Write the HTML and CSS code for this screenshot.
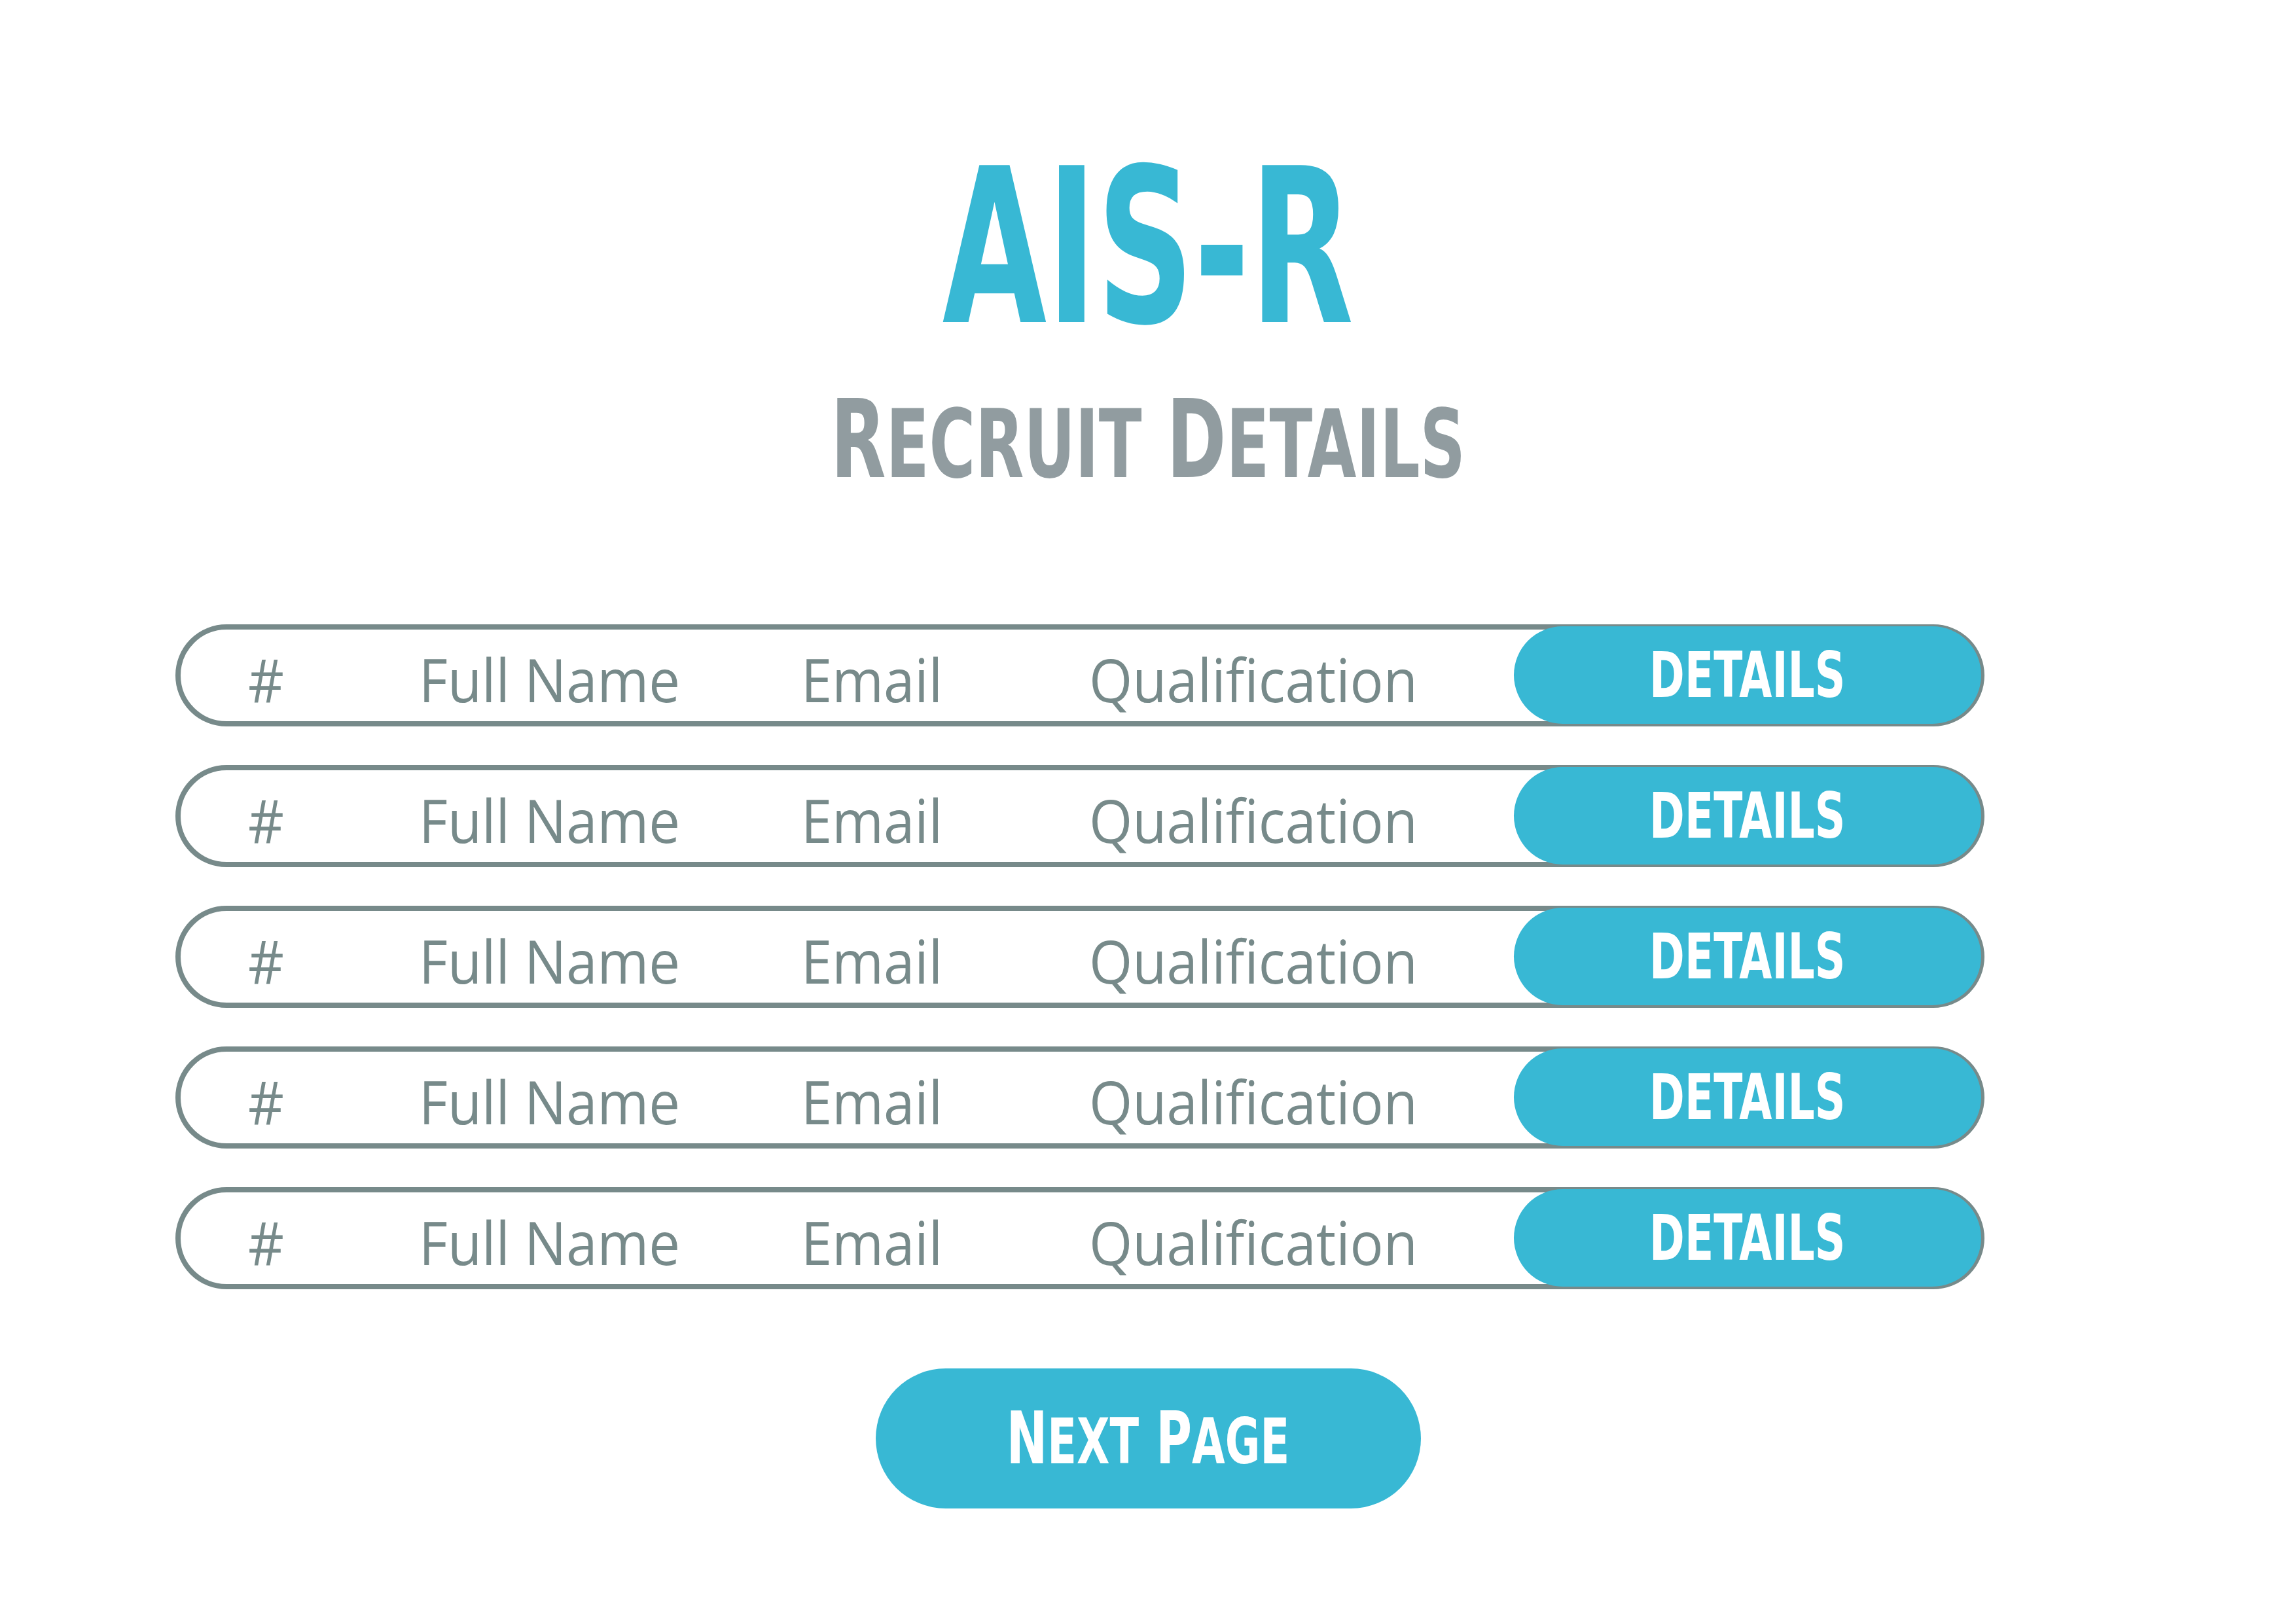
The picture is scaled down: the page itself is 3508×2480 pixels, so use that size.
FILE: index.html
```html
<!DOCTYPE html>
<html lang="en">
<head>
<meta charset="utf-8">
<title>AIS-R Recruit Details</title>
<link rel="stylesheet" href="styles.css">
</head>
<body>
<main class="page">
  <header class="masthead">
    <h1 class="brand"><span class="squeeze brand-text">AIS-R</span></h1>
    <h2 class="subtitle"><span class="squeeze sub-text"><span class="cap">R</span><span class="sc">ecruit</span> <span class="cap">D</span><span class="sc">etails</span></span></h2>
  </header>

  <section class="list">
    <div class="row">
      <span class="cell">#</span>
      <span class="cell">Full Name</span>
      <span class="cell">Email</span>
      <span class="cell">Qualification</span>
      <button class="details-btn"><span class="squeeze details-text">DETAILS</span></button>
    </div>
    <div class="row">
      <span class="cell">#</span>
      <span class="cell">Full Name</span>
      <span class="cell">Email</span>
      <span class="cell">Qualification</span>
      <button class="details-btn"><span class="squeeze details-text">DETAILS</span></button>
    </div>
    <div class="row">
      <span class="cell">#</span>
      <span class="cell">Full Name</span>
      <span class="cell">Email</span>
      <span class="cell">Qualification</span>
      <button class="details-btn"><span class="squeeze details-text">DETAILS</span></button>
    </div>
    <div class="row">
      <span class="cell">#</span>
      <span class="cell">Full Name</span>
      <span class="cell">Email</span>
      <span class="cell">Qualification</span>
      <button class="details-btn"><span class="squeeze details-text">DETAILS</span></button>
    </div>
    <div class="row">
      <span class="cell">#</span>
      <span class="cell">Full Name</span>
      <span class="cell">Email</span>
      <span class="cell">Qualification</span>
      <button class="details-btn"><span class="squeeze details-text">DETAILS</span></button>
    </div>
  </section>

  <div class="pager">
    <button class="next-btn"><span class="squeeze next-text"><span class="cap">N</span><span class="sc">ext</span> <span class="cap">P</span><span class="sc">age</span></span></button>
  </div>
</main>
</body>
</html>
```

FILE: styles.css
```css
html, body {
  margin: 0;
  padding: 0;
  background: #ffffff;
}

body {
  width: 3508px;
  height: 2480px;
  overflow: hidden;
}

.page {
  display: flex;
  flex-direction: column;
  align-items: center;
  padding-top: 214px;
}

.masthead {
  display: flex;
  flex-direction: column;
  align-items: center;
}

.squeeze {
  display: inline-block;
  transform-origin: center center;
  white-space: nowrap;
}

.brand {
  margin: 0;
  font-family: "DejaVu Sans", sans-serif;
  font-weight: 700;
  font-size: 329px;
  line-height: 1;
  color: #38b8d4;
}

.brand-text {
  transform: scaleX(0.626);
}

.subtitle {
  margin: 47px 0 0 0;
  font-family: "DejaVu Sans", sans-serif;
  font-weight: 700;
  font-size: 165px;
  line-height: 1;
  color: #919ca0;
}

.sub-text {
  transform: scaleX(0.664);
}

.sc {
  text-transform: uppercase;
  font-size: 0.88em;
}

.list {
  align-self: flex-start;
  margin: 199px 0 0 268px;
  display: flex;
  flex-direction: column;
  gap: 59px;
}

.row {
  box-sizing: border-box;
  width: 2764px;
  height: 156px;
  border: 8px solid #778a8a;
  border-radius: 999px;
  padding-left: 103px;
  display: grid;
  grid-template-columns: 261px 584px 440px 1fr auto;
  align-items: center;
}

.cell {
  display: inline-block;
  justify-self: start;
  transform: scaleX(0.925);
  transform-origin: left center;
  font-family: "Open Sans", "Noto Sans", sans-serif;
  font-weight: 400;
  font-size: 92px;
  line-height: 1;
  color: #778a8a;
  padding-top: 12px;
  white-space: nowrap;
}

.details-btn {
  align-self: stretch;
  margin: -5px -3px -4px 0;
  width: 714px;
  padding: 0;
  border: none;
  border-radius: 999px;
  background: #38b8d4;
  color: #ffffff;
  display: flex;
  align-items: center;
  justify-content: center;
  font-family: "DejaVu Sans", sans-serif;
  font-weight: 700;
  font-size: 96px;
  line-height: 1;
}

.details-text {
  transform: scaleX(0.675);
}

.pager {
  margin-top: 121px;
  display: flex;
  justify-content: center;
}

.next-btn {
  width: 833px;
  height: 214px;
  padding: 0;
  border: none;
  border-radius: 999px;
  background: #38b8d4;
  color: #ffffff;
  display: flex;
  align-items: center;
  justify-content: center;
  font-family: "DejaVu Sans", sans-serif;
  font-weight: 700;
  font-size: 110px;
  line-height: 1;
}

.next-btn .sc {
  font-size: 0.875em;
}

.next-text {
  transform: scaleX(0.68);
}
```
